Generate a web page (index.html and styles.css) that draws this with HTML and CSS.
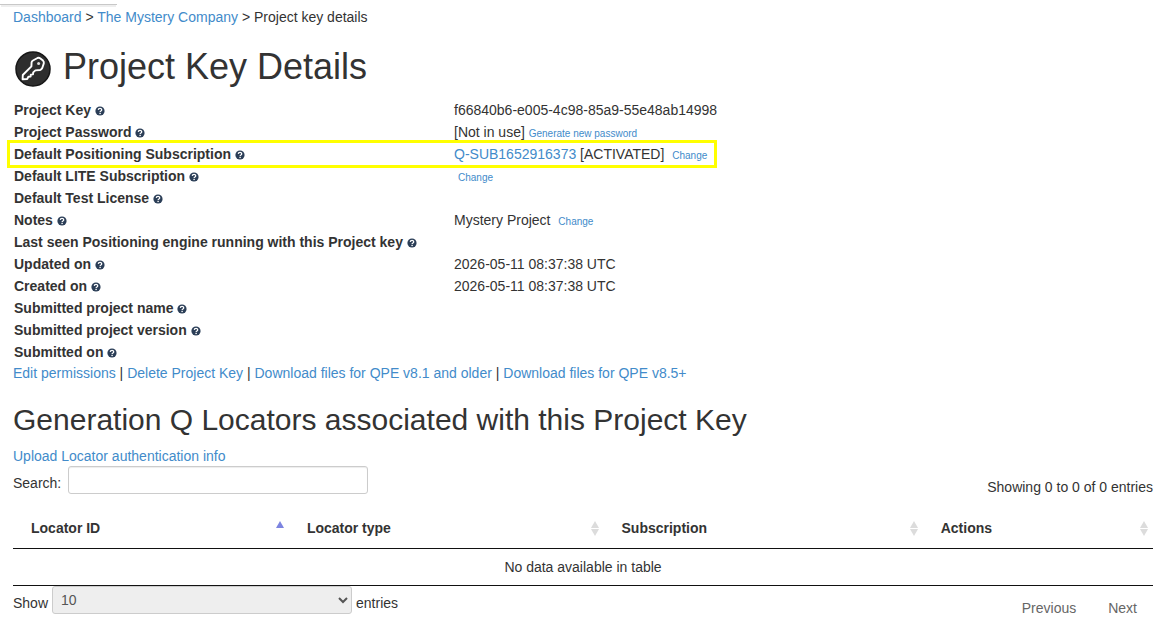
FILE: index.html
```html
<!DOCTYPE html>
<html lang="en">
<head>
    <meta charset="UTF-8">
    <meta name="viewport" content="width=device-width, initial-scale=1.0">
    <title>Project key details</title>
    <link rel="stylesheet" href="styles.css">
</head>
<body>
    <svg class="icon-defs" aria-hidden="true">
        <symbol id="help" viewBox="0 0 10 10">
            <circle cx="5" cy="5" r="4.6" fill="#2b3e57"/>
            <path d="M3.3 3.9C3.4 1.9 6.7 1.9 6.7 3.9C6.7 5 5.1 4.9 5.1 6.1" fill="none" stroke="#fff" stroke-width="1.3"/>
            <rect x="4.4" y="6.8" width="1.4" height="1.3" fill="#fff"/>
        </symbol>
    </svg>

    <div class="top-edge"></div>

    <div class="container">
        <nav class="breadcrumb">
            <a href="#">Dashboard</a> &gt; <a href="#">The Mystery Company</a> &gt; Project key details
        </nav>

        <h1>
            <svg class="key-icon" viewBox="0 0 40 40" aria-hidden="true">
                <circle cx="20" cy="22" r="17" fill="#2e2e2e" stroke="#161616" stroke-width="1.5"/>
                <path d="M20 13.5L24.5 11Q26 10.4 27.4 11.5L30 13.6Q31.2 14.8 30.8 16.4L29.2 21.2Q28.6 22.7 27 23L22.4 23.4L20.2 25.4L20 27.4L17.8 27.6L17.6 29.6L15.4 29.8L14.2 32L9.6 32.2L9.8 28L18.4 19.4L18.6 15.2Q18.8 14.2 20 13.5Z" fill="none" stroke="#fff" stroke-width="1.9" stroke-linejoin="round"/>
                <circle cx="25.6" cy="16.6" r="1.5" fill="#ddd"/>
            </svg>
            Project Key Details
        </h1>

        <table class="details">
            <tr>
                <th scope="row">Project Key <svg class="help"><use href="#help"/></svg></th>
                <td>f66840b6-e005-4c98-85a9-55e48ab14998</td>
            </tr>
            <tr>
                <th scope="row">Project Password <svg class="help"><use href="#help"/></svg></th>
                <td>[Not in use] <a class="small" href="#">Generate new password</a></td>
            </tr>
            <tr class="highlight">
                <th scope="row">Default Positioning Subscription <svg class="help"><use href="#help"/></svg></th>
                <td><a href="#">Q-SUB1652916373</a> [ACTIVATED] <a class="small change" href="#">Change</a></td>
            </tr>
            <tr>
                <th scope="row">Default LITE Subscription <svg class="help"><use href="#help"/></svg></th>
                <td><a class="small change" href="#">Change</a></td>
            </tr>
            <tr>
                <th scope="row">Default Test License <svg class="help"><use href="#help"/></svg></th>
                <td></td>
            </tr>
            <tr>
                <th scope="row">Notes <svg class="help"><use href="#help"/></svg></th>
                <td>Mystery Project <a class="small change" href="#">Change</a></td>
            </tr>
            <tr>
                <th scope="row">Last seen Positioning engine running with this Project key <svg class="help"><use href="#help"/></svg></th>
                <td></td>
            </tr>
            <tr>
                <th scope="row">Updated on <svg class="help"><use href="#help"/></svg></th>
                <td>2026-05-11 08:37:38 UTC</td>
            </tr>
            <tr>
                <th scope="row">Created on <svg class="help"><use href="#help"/></svg></th>
                <td>2026-05-11 08:37:38 UTC</td>
            </tr>
            <tr>
                <th scope="row">Submitted project name <svg class="help"><use href="#help"/></svg></th>
                <td></td>
            </tr>
            <tr>
                <th scope="row">Submitted project version <svg class="help"><use href="#help"/></svg></th>
                <td></td>
            </tr>
            <tr>
                <th scope="row">Submitted on <svg class="help"><use href="#help"/></svg></th>
                <td></td>
            </tr>
        </table>

        <div class="actions">
            <a href="#">Edit permissions</a> | <a href="#">Delete Project Key</a> | <a href="#">Download files for QPE v8.1 and older</a> | <a href="#">Download files for QPE v8.5+</a>
        </div>

        <h2>Generation Q Locators associated with this Project Key</h2>
        <a class="upload" href="#">Upload Locator authentication info</a>

        <div class="table-bar">
            <div class="field">
                <label for="search">Search:</label>
                <input type="search" id="search">
            </div>
            <div class="table-info">Showing 0 to 0 of 0 entries</div>
        </div>

        <table class="locators">
            <thead>
                <tr>
                    <th class="col-id sorted">Locator ID</th>
                    <th class="col-type">Locator type</th>
                    <th class="col-sub">Subscription</th>
                    <th class="col-actions">Actions</th>
                </tr>
            </thead>
            <tbody>
                <tr>
                    <td colspan="4">No data available in table</td>
                </tr>
            </tbody>
        </table>

        <div class="table-footer">
            <div class="field length">
                <label for="length">Show</label>
                <select id="length">
                    <option>10</option>
                    <option>25</option>
                    <option>50</option>
                    <option>100</option>
                </select>
                <label for="length">entries</label>
            </div>
            <div class="paginate">
                <a href="#">Previous</a>
                <a href="#">Next</a>
            </div>
        </div>
    </div>
</body>
</html>
```
FILE: styles.css
```css
* {
    box-sizing: border-box;
}

body {
    margin: 0;
    font-family: "Liberation Sans", Arial, sans-serif;
    font-size: 14px;
    line-height: 20px;
    color: #333;
    background-color: #fff;
}

a {
    color: #428bca;
    text-decoration: none;
}

a:hover {
    text-decoration: underline;
}

.icon-defs {
    position: absolute;
    width: 0;
    height: 0;
}

.top-edge {
    width: 117px;
    height: 4px;
    box-shadow: 0 1px 0 #c8c8c8, 0 4px 0 -1px #eee;
}

.container {
    padding: 3px 21px 10px 13px;
}

h1 {
    display: flex;
    align-items: center;
    gap: 10px;
    margin: 20px 0 12px;
    font-size: 36px;
    font-weight: 500;
    line-height: 40px;
}

.key-icon {
    width: 40px;
    height: 40px;
}

h2 {
    margin: 20px 0 10px;
    font-size: 30px;
    font-weight: 500;
    line-height: 33px;
}

.details {
    border-collapse: collapse;
}

.details th,
.details td {
    height: 22px;
    padding: 1px;
    text-align: left;
    white-space: nowrap;
}

.details th {
    width: 440px;
}

.help {
    width: 10px;
    height: 10px;
    vertical-align: -1px;
}

.small {
    font-size: 10px;
    line-height: 10px;
}

.change {
    margin-left: 4px;
}

.highlight {
    position: relative;
}

.highlight::after {
    content: "";
    position: absolute;
    inset: -3px 1px -3px -6px;
    border: 3px solid #ff0;
    pointer-events: none;
}

.upload {
    display: block;
}

.table-bar,
.table-footer {
    display: flex;
    justify-content: space-between;
}

.table-bar {
    margin-bottom: 11px;
}

.table-info {
    padding-top: 11px;
}

.field {
    display: flex;
    gap: 7px;
}

.field label {
    padding-top: 7px;
}

.field input,
.field select {
    width: 300px;
    height: 28px;
    border: 1px solid #ccc;
    border-radius: 3px;
    font-family: inherit;
    font-size: 14px;
    color: #555;
}

.field input {
    padding: 4px 8px;
    background-color: #fff;
    box-shadow: inset 0 1px 1px rgba(0, 0, 0, 0.075);
}

.field select {
    padding: 0 4px;
    background-color: #eee;
}

.length {
    gap: 4px;
}

.locators {
    width: 100%;
    table-layout: fixed;
    border-collapse: separate;
    border-spacing: 0;
    border-bottom: 1px solid #111;
}

.locators th {
    position: relative;
    padding: 10px 18px;
    border-bottom: 1px solid #111;
    text-align: left;
}

.locators th::before,
.locators th::after {
    content: "";
    position: absolute;
    right: 5px;
    border: 4px solid transparent;
}

.locators th::before {
    top: 9px;
    border-bottom: 7px solid #dcdcdc;
}

.locators th::after {
    top: 21px;
    border-top: 7px solid #dcdcdc;
}

.locators .sorted::before {
    border-bottom-color: #7c84e0;
}

.locators .sorted::after {
    display: none;
}

.locators td {
    padding: 8px 10px;
    text-align: center;
}

.col-id {
    width: 24.2%;
}

.col-type {
    width: 27.6%;
}

.col-sub {
    width: 28%;
}

.paginate {
    display: flex;
    padding-top: 12px;
}

.paginate a {
    padding: 0 16px;
    color: #666;
}
```
